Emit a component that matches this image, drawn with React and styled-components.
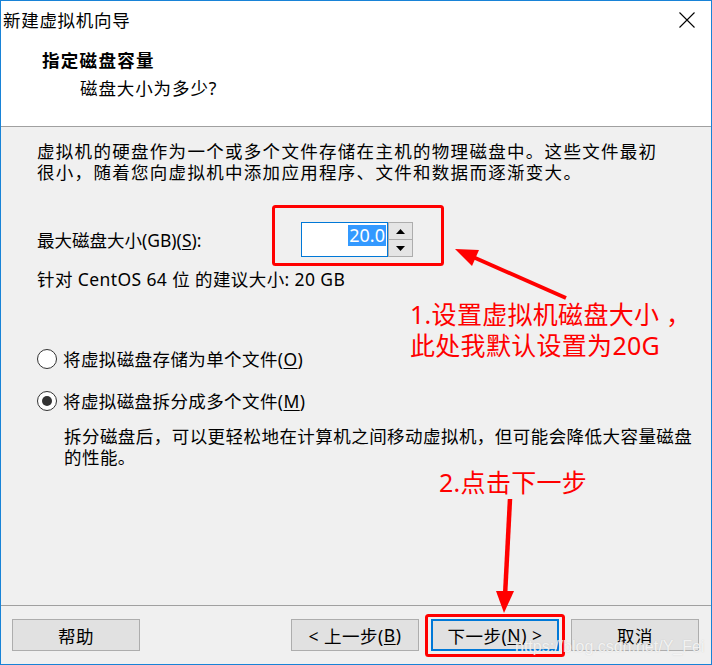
import React from "react";
import styled, { createGlobalStyle } from "styled-components";

const Global = createGlobalStyle`
  html, body { margin: 0; padding: 0; background: #f0f0f0; }
  body { font-family: "Noto Sans", "Noto Sans CJK SC", sans-serif; }
  * { box-sizing: border-box; }
`;

const FONT = `"Noto Sans", "Noto Sans CJK SC", sans-serif`;

const Window = styled.div`
  position: relative;
  width: 712px;
  height: 665px;
  border: 1px solid #1883d7;
  background: #f0f0f0;
  display: flex;
  flex-direction: column;
  font-family: ${FONT};
  font-size: 17px;
  color: #000;
  overflow: hidden;
`;

const TitleBar = styled.div`
  height: 37px;
  background: #fff;
  display: flex;
  align-items: center;
  justify-content: space-between;
  padding: 0 16px 0 2px;
  font-size: 17.5px;
  letter-spacing: 0.7px;
`;

const CloseBtn = styled.svg`
  width: 16px;
  height: 16px;
  display: block;
`;

const Header = styled.div`
  height: 89px;
  background: #fff;
  border-bottom: 1px solid #a0a0a0;
  padding: 10px 0 0 41px;
`;

const HeaderTitle = styled.div`
  font-weight: 700;
  font-size: 17.5px;
  line-height: 24px;
  letter-spacing: 1.3px;
`;

const HeaderSub = styled.div`
  margin: 4px 0 0 38px;
  font-size: 17.5px;
  line-height: 24px;
  letter-spacing: 0.9px;
`;

const Content = styled.div`
  flex: 1;
  padding: 14px 0 0 36px;
`;

const Para = styled.p`
  margin: 0;
  width: 670px;
  line-height: 21px;
  font-size: 17.5px;
  letter-spacing: ${(p) => p.$spacing || 0}px;
  margin-left: ${(p) => p.$indent || 0}px;
  margin-top: ${(p) => p.$top || 0}px;
`;

const SizeRow = styled.div`
  display: flex;
  align-items: center;
  margin-top: 39px;
  height: 35px;
`;

const SizeLabel = styled.div`
  width: 264px;
  font-size: 17.5px;
`;

const Spin = styled.div`
  display: flex;
  height: 35px;
`;

const SpinInput = styled.div`
  width: 87px;
  height: 35px;
  border: 1px solid #0078d7;
  background: #fff;
  display: flex;
  justify-content: flex-end;
  align-items: flex-start;
  padding: 2px 1px 0 0;
`;

const Selected = styled.span`
  background: #3399ff;
  color: #fff;
  font-size: 18px;
  line-height: 21px;
  padding: 0 1px;
`;

const SpinButtons = styled.div`
  display: flex;
  flex-direction: column;
  width: 25px;
`;

const SpinBtn = styled.div`
  flex: 1;
  border: 1px solid #adadad;
  margin-top: ${(p) => (p.$down ? "-1px" : "0")};
  background: #e5e5e5;
  display: flex;
  align-items: center;
  justify-content: center;
`;

const Tri = styled.svg`
  width: 9px;
  height: 5px;
  display: block;
`;

const Radios = styled.div`
  margin-top: 58px;
  display: flex;
  flex-direction: column;
  gap: 21px;
`;

const RadioRow = styled.label`
  display: flex;
  align-items: center;
  height: 21px;
  font-size: 17.5px;
  letter-spacing: 0.4px;
  gap: 6px;
`;

const RadioCircle = styled.span`
  width: 20px;
  height: 20px;
  border-radius: 50%;
  border: 1px solid #333;
  background: #fff;
  display: flex;
  align-items: center;
  justify-content: center;
  &::after {
    content: "";
    width: 10px;
    height: 10px;
    border-radius: 50%;
    background: ${(p) => (p.$checked ? "#333" : "transparent")};
  }
`;

const U = styled.span`
  text-decoration: underline;
  text-underline-offset: 2px;
`;

const Footer = styled.div`
  height: 59px;
  border-top: 1px solid #a0a0a0;
  display: flex;
  justify-content: space-between;
  padding: 13px 12px 0 11px;
`;

const BtnGroup = styled.div`
  display: flex;
  gap: 12px;
`;

const Button = styled.div`
  width: 128px;
  height: 32px;
  background: #e1e1e1;
  border: ${(p) => (p.$default ? "2px solid #0078d7" : "1px solid #adadad")};
  display: flex;
  align-items: center;
  justify-content: center;
  font-size: 17.5px;
  letter-spacing: 0.5px;
`;

const Overlay = styled.svg`
  position: absolute;
  left: -1px;
  top: -1px;
  width: 712px;
  height: 665px;
  pointer-events: none;
`;

const Note = styled.div`
  position: absolute;
  left: ${(p) => p.$x}px;
  top: ${(p) => p.$y}px;
  color: #ff0000;
  font-size: 25px;
  line-height: 31px;
  letter-spacing: 0.3px;
  white-space: nowrap;
  pointer-events: none;
`;

const Watermark = styled.div`
  position: absolute;
  left: 514px;
  top: 637px;
  font-family: "Liberation Sans", Arial, sans-serif;
  font-size: 16px;
  color: rgba(255, 255, 255, 0.8);
  text-shadow: 0 0 1px rgba(160, 160, 160, 0.5);
  pointer-events: none;
`;

export default function App() {
  return (
    <>
      <Global />
      <Window>
        <TitleBar>
          <span>新建虚拟机向导</span>
          <CloseBtn viewBox="0 0 16 16">
            <path d="M0.5 0.5 L15.5 15.5 M15.5 0.5 L0.5 15.5" stroke="#000" strokeWidth="1.1" fill="none" />
          </CloseBtn>
        </TitleBar>
        <Header>
          <HeaderTitle>指定磁盘容量</HeaderTitle>
          <HeaderSub>磁盘大小为多少?</HeaderSub>
        </Header>
        <Content>
          <Para $spacing={1.3}>
            虚拟机的硬盘作为一个或多个文件存储在主机的物理磁盘中。这些文件最初
            <br />
            很小，随着您向虚拟机中添加应用程序、文件和数据而逐渐变大。
          </Para>
          <SizeRow>
            <SizeLabel>
              最大磁盘大小(GB)(<U>S</U>):
            </SizeLabel>
            <Spin>
              <SpinInput>
                <Selected>20.0</Selected>
              </SpinInput>
              <SpinButtons>
                <SpinBtn>
                  <Tri viewBox="0 0 9 5">
                    <path d="M0 5 L4.5 0 L9 5 Z" fill="#000" />
                  </Tri>
                </SpinBtn>
                <SpinBtn $down>
                  <Tri viewBox="0 0 9 5">
                    <path d="M0 0 L9 0 L4.5 5 Z" fill="#000" />
                  </Tri>
                </SpinBtn>
              </SpinButtons>
            </Spin>
          </SizeRow>
          <Para $top={12} $spacing={0.4}>针对 CentOS 64 位 的建议大小: 20 GB</Para>
          <Radios>
            <RadioRow>
              <RadioCircle />
              <span>
                将虚拟磁盘存储为单个文件(<U>O</U>)
              </span>
            </RadioRow>
            <RadioRow>
              <RadioCircle $checked />
              <span>
                将虚拟磁盘拆分成多个文件(<U>M</U>)
              </span>
            </RadioRow>
          </Radios>
          <Para $indent={27} $top={15} $spacing={0.45}>
            拆分磁盘后，可以更轻松地在计算机之间移动虚拟机，但可能会降低大容量磁盘
            <br />
            的性能。
          </Para>
        </Content>
        <Footer>
          <Button>帮助</Button>
          <BtnGroup>
            <Button>
              &lt; 上一步(<U>B</U>)
            </Button>
            <Button $default>
              下一步(<U>N</U>) &gt;
            </Button>
            <Button>取消</Button>
          </BtnGroup>
        </Footer>

        <Overlay viewBox="0 0 712 665">
          <rect x="273.5" y="206.5" width="169" height="58" rx="2" fill="none" stroke="#ff0000" strokeWidth="3" />
          <rect x="426.5" y="615.5" width="137" height="40" rx="2" fill="none" stroke="#ff0000" strokeWidth="3" />
          <line x1="566" y1="298" x2="473" y2="257" stroke="#ff0000" strokeWidth="4" />
          <polygon points="455,249 479,250 472,266" fill="#ff0000" />
          <line x1="510" y1="499" x2="505" y2="596" stroke="#ff0000" strokeWidth="4.5" />
          <polygon points="504,613 496,591 514,591" fill="#ff0000" />
        </Overlay>
        <Note $x={409} $y={298}>
          1.设置虚拟机磁盘大小 ，
          <br />
          此处我默认设置为20G
        </Note>
        <Note $x={438} $y={466}>2.点击下一步</Note>
        <Watermark>https://blog.csdn.net/Y_Fei</Watermark>
      </Window>
    </>
  );
}
